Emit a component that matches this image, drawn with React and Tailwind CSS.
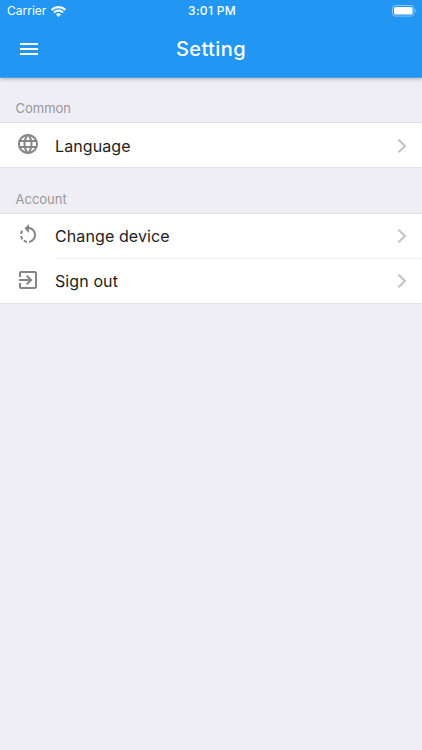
import { MdExitToApp, MdLanguage, MdMenu, MdRotateLeft } from 'react-icons/md'

const sections = [
  {
    title: 'Common',
    items: [{ label: 'Language', icon: MdLanguage }],
  },
  {
    title: 'Account',
    items: [
      { label: 'Change device', icon: MdRotateLeft },
      { label: 'Sign out', icon: MdExitToApp },
    ],
  },
]

function WifiIcon() {
  return (
    <svg width="15" height="11" viewBox="0 0 15 11" fill="none" stroke="currentColor">
      <path d="M0.7 3.9A9.8 9.8 0 0 1 14.3 3.9" strokeWidth="2.3" />
      <path d="M3 6.4A6.4 6.4 0 0 1 12 6.4" strokeWidth="2.1" />
      <path d="M7.5 11L5 8.5A3.5 3.5 0 0 1 10 8.5Z" fill="currentColor" stroke="none" />
    </svg>
  )
}

function BatteryIcon() {
  return (
    <svg width="25" height="12" viewBox="0 0 25 12">
      <rect x="0.5" y="0.5" width="21.5" height="10.6" rx="3" fill="none" stroke="#fff" strokeOpacity="0.45" />
      <rect x="2" y="2" width="18.5" height="7.6" rx="1.6" fill="#fff" />
      <path d="M23.3 4v3.6c1.3-.5 1.3-3.1 0-3.6z" fill="#fff" fillOpacity="0.5" />
    </svg>
  )
}

function StatusBar() {
  return (
    <div className="flex h-[22px] items-center pl-[7px] pr-[5px]">
      <div className="flex flex-1 items-center gap-[5px]">
        <span className="text-[12px]">Carrier</span>
        <WifiIcon />
      </div>
      <span className="text-[12px] font-medium tracking-[0.3px]">3:01 PM</span>
      <div className="flex flex-1 justify-end">
        <BatteryIcon />
      </div>
    </div>
  )
}

function Row({ item, last }) {
  const Icon = item.icon
  return (
    <button
      className={`flex h-[45px] w-full items-stretch border-b pl-4 text-left ${
        last ? 'border-[#dfdfe4]' : 'border-transparent'
      }`}
    >
      <Icon className="mt-[9px] size-6 shrink-0 text-[#858585]" />
      <div
        className={`-mb-px ml-[15px] flex flex-1 items-center justify-between border-b pr-[14px] ${
          last ? 'border-transparent' : 'border-[#f4f4f6]'
        }`}
      >
        <span className="pt-[1px] text-[16px] tracking-[0.1px] text-[#222]">{item.label}</span>
        <svg width="12" height="16" viewBox="0 0 12 16" fill="none" stroke="#c2c2c6" strokeWidth="2" className="mt-[1px]">
          <path d="M2.5 1.8L9 8L2.5 14.2" />
        </svg>
      </div>
    </button>
  )
}

export default function App() {
  return (
    <div className="h-[750px] w-full overflow-hidden bg-[#efeef5] font-['Inter','Liberation_Sans',sans-serif]">
      <header className="relative h-[78px] border-b border-[#4aa3ee] bg-[#2196f3] text-white shadow-[0_1px_4px_rgba(0,0,0,0.28)]">
        <StatusBar />
        <div className="grid h-[54px] grid-cols-[40px_1fr_40px] items-center px-[17px]">
          <MdMenu className="size-6" />
          <h1 className="text-center text-[20px] font-medium tracking-[0.4px]">Setting</h1>
        </div>
      </header>

      {sections.map((section) => (
        <section key={section.title}>
          <h2 className="flex h-[44.4px] items-end pb-[5px] pl-[15.5px] text-[13px] leading-[18px] text-[#96969a]">
            {section.title}
          </h2>
          <div className="border-t border-[#dfdfe4] bg-white">
            {section.items.map((item, i) => (
              <Row key={item.label} item={item} last={i === section.items.length - 1} />
            ))}
          </div>
        </section>
      ))}
    </div>
  )
}
